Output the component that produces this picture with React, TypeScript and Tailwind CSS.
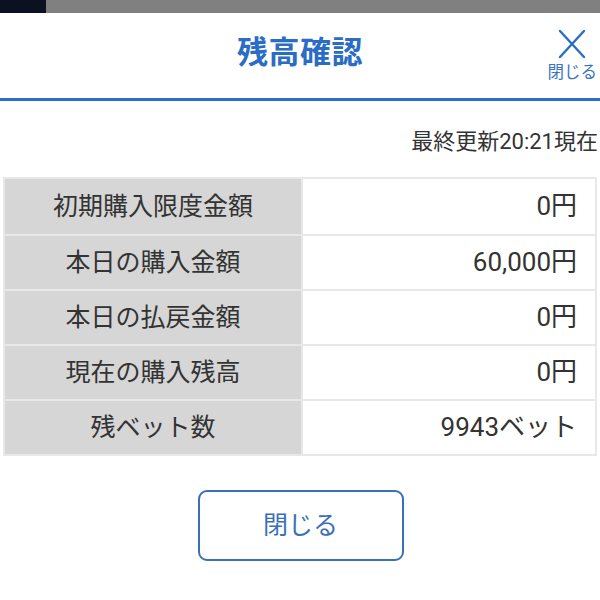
import React from 'react';

const ROWS: { label: string; value: string }[] = [
  { label: '初期購入限度金額', value: '0円' },
  { label: '本日の購入金額', value: '60,000円' },
  { label: '本日の払戻金額', value: '0円' },
  { label: '現在の購入残高', value: '0円' },
  { label: '残ベット数', value: '9943ベット' },
];

const FONT = { fontFamily: 'Roboto, "Noto Sans CJK JP", "Noto Sans", sans-serif' };

export default function App() {
  return (
    <div className="w-[600px] h-[600px] bg-white overflow-hidden text-[#333]" style={FONT}>
      {/* status strip */}
      <div className="flex h-[13px]">
        <div className="w-[46px] bg-[#0b1120]" />
        <div className="flex-1 bg-[#808080]" />
      </div>

      {/* header */}
      <div className="relative h-[88px] flex items-center justify-center border-b-[3px] border-[#2b6cc8]">
        <h1 className="text-[31px] font-bold text-[#2b6cc4] tracking-[0.5px] leading-none -mt-[6px]">残高確認</h1>
        <button className="absolute right-[3px] top-[16px] flex flex-col items-center text-[#2b6cc4]">
          <svg width="30" height="30" viewBox="0 0 30 30" fill="none" stroke="currentColor" strokeWidth="2.4" strokeLinecap="round">
            <path d="M3 2 L27 28 M27 2 L3 28" />
          </svg>
          <span className="text-[16.5px] leading-none mt-[6px] text-[#3b74c4]">閉じる</span>
        </button>
      </div>

      {/* updated time */}
      <div className="flex justify-end pr-[2px] pt-[28px] pb-[22px]">
        <span className="text-[22px] leading-[26px] text-[#333]">最終更新20:21現在</span>
      </div>

      {/* table */}
      <div className="mx-[3px] border-2 border-[#e8e8e8] flex flex-col">
        {ROWS.map((r, i) => (
          <div key={r.label} className={`flex h-[55px] ${i > 0 ? 'border-t-2 border-[#e8e8e8]' : ''}`}>
            <div className="w-[296px] bg-[#d6d6d6] flex items-center justify-center text-[25px] text-[#333]">
              {r.label}
            </div>
            <div className="flex-1 border-l-2 border-[#e8e8e8] bg-white flex items-center justify-end pr-[18px] text-[26px] text-[#333]">
              {r.value}
            </div>
          </div>
        ))}
      </div>

      {/* close button */}
      <div className="flex justify-center pt-[34px]">
        <button className="w-[206px] h-[71px] border-2 border-[#3a70b8] rounded-[9px] text-[25px] text-[#3a70b8] bg-white ml-[1px]">
          閉じる
        </button>
      </div>
    </div>
  );
}
